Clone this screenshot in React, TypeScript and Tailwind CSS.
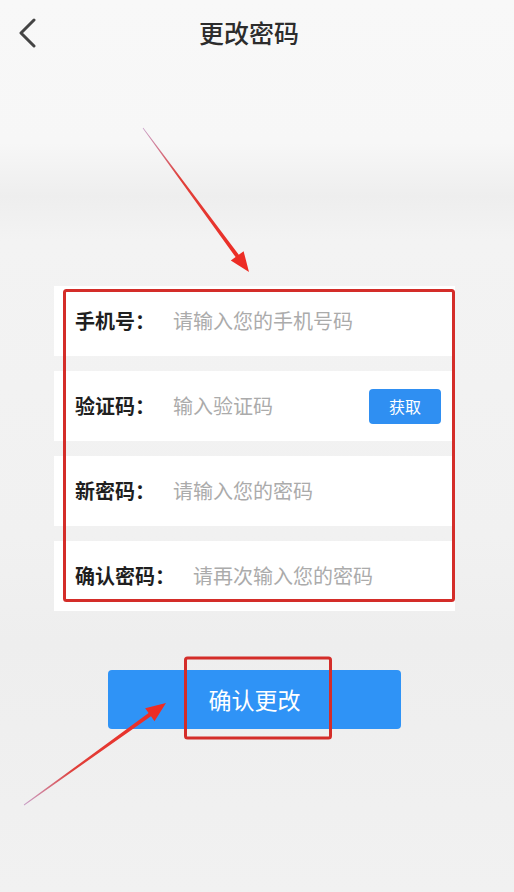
import React from 'react';

interface Field {
  label: string;
  placeholder: string;
  action?: string;
}

const fields: Field[] = [
  { label: '手机号：', placeholder: '请输入您的手机号码' },
  { label: '验证码：', placeholder: '输入验证码', action: '获取' },
  { label: '新密码：', placeholder: '请输入您的密码' },
  { label: '确认密码：', placeholder: '请再次输入您的密码' },
];

const font = "font-['Noto_Sans_CJK_SC','Noto_Sans',sans-serif]";

// red markup drawn over the screenshot (boxes + arrows)
const Annotations: React.FC = () => (
  <svg className="absolute inset-0 pointer-events-none" width="514" height="892" viewBox="0 0 514 892">
    <defs>
      <linearGradient id="a1" x1="143" y1="128" x2="249" y2="272" gradientUnits="userSpaceOnUse">
        <stop offset="0" stopColor="#c9a0c8" />
        <stop offset="0.35" stopColor="#e0403a" />
        <stop offset="1" stopColor="#ee2a22" />
      </linearGradient>
      <linearGradient id="a2" x1="24" y1="805" x2="166" y2="703" gradientUnits="userSpaceOnUse">
        <stop offset="0" stopColor="#c9a0c8" />
        <stop offset="0.35" stopColor="#e0403a" />
        <stop offset="1" stopColor="#ee2a22" />
      </linearGradient>
    </defs>
    <rect x="64.5" y="290.5" width="389" height="310" rx="2" fill="none" stroke="#d42d29" strokeWidth="3" />
    <rect x="185.5" y="658" width="145" height="80" rx="2" fill="none" stroke="#d42d29" strokeWidth="3" />
    <polygon
      points="142.7,128.3 143.3,127.7 238.8,254.7 243.6,251.2 249,272 230.8,260.6 235.6,257.1"
      fill="url(#a1)"
    />
    <polygon
      points="23.8,804.6 24.2,805.4 151,716.3 154.5,721.2 166,703 145.1,708.2 148.6,713.1"
      fill="url(#a2)"
    />
  </svg>
);

const App: React.FC = () => {
  return (
    <div
      className={`relative w-[514px] h-[892px] overflow-hidden ${font} bg-[linear-gradient(180deg,#f8f8f8_0%,#f7f7f7_16%,#eeeeee_22%,#f3f3f3_27%,#f1f1f1_60%,#eeeeee_72%,#f1f1f1_100%)]`}
    >
      {/* Header */}
      <div className="grid grid-cols-[60px_1fr_76px] items-center h-[66px]">
        <button className="flex items-center justify-center h-[66px] w-[60px]">
          <svg width="20" height="30" viewBox="0 0 20 30" className="ml-[-4px]">
            <path d="M16 2 L3 15 L16 28" fill="none" stroke="#444" strokeWidth="3" strokeLinecap="round" strokeLinejoin="round" />
          </svg>
        </button>
        <h1 className="text-center text-[25px] font-medium text-[#2c2c2c]">更改密码</h1>
        <div />
      </div>

      {/* Form */}
      <div className="ml-[54px] mt-[220px] w-[401px] flex flex-col gap-[15px]">
        {fields.map((f) => (
          <div key={f.label} className="h-[70px] bg-white flex items-center pl-[21px] pr-[14px]">
            <span className="text-[20px] font-bold text-[#1f1f1f]">{f.label}</span>
            <span className="ml-[18px] text-[20px] text-[#ababab] flex-1">{f.placeholder}</span>
            {f.action && (
              <button className="w-[72px] h-[35px] rounded-[4px] bg-[#2f8ff2] text-white text-[16px]">
                {f.action}
              </button>
            )}
          </div>
        ))}
      </div>

      {/* Submit */}
      <button className="ml-[108px] mt-[59px] w-[293px] h-[59px] rounded-[4px] bg-[#2f93f6] text-white text-[23px]">
        确认更改
      </button>

      <Annotations />
    </div>
  );
};

export default App;
